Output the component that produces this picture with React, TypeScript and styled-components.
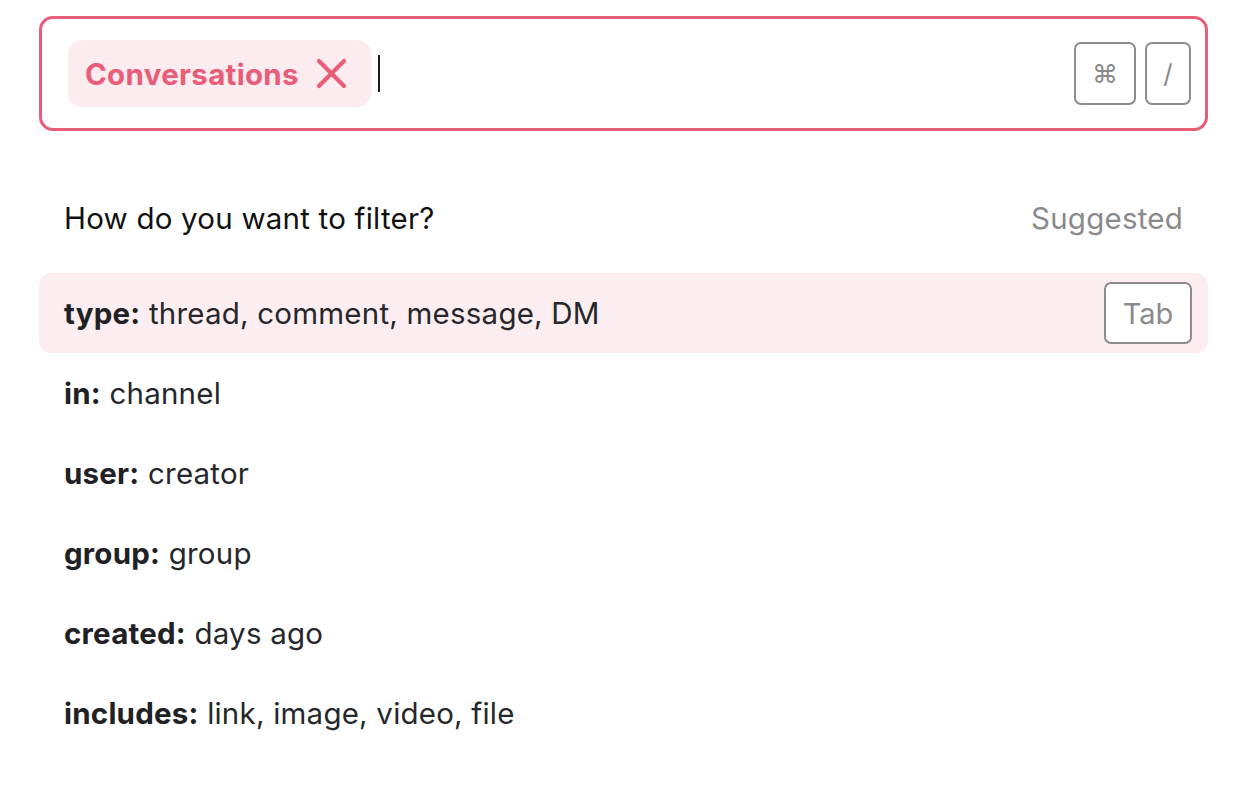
import React from "react";
import styled, { createGlobalStyle } from "styled-components";

const Global = createGlobalStyle`
  html, body { margin: 0; padding: 0; background: #ffffff; }
  body {
    font-family: Inter, "Noto Sans", sans-serif;
    -webkit-font-smoothing: antialiased;
  }
  * { box-sizing: border-box; }
`;

const PINK = "#e85d78";

const Page = styled.div`
  padding: 16px 26px 40px 39px;
  font-size: 29.5px;
  letter-spacing: 0.22px;
`;

const SearchBox = styled.div`
  height: 115px;
  border: 3px solid ${PINK};
  border-radius: 14px;
  display: flex;
  align-items: center;
  padding: 0 14px 0 26px;
`;

const Chip = styled.div`
  height: 67px;
  display: flex;
  align-items: center;
  gap: 17px;
  padding: 0 24px 0 17px;
  background: #fcebef;
  border-radius: 14px;
  color: ${PINK};
  font-weight: 700;
  font-size: 29.5px;
  letter-spacing: 0.3px;
`;

const Caret = styled.div`
  width: 2px;
  height: 37px;
  background: #1c1c1c;
  margin-left: 7px;
`;

const Spacer = styled.div`
  flex: 1;
`;

const Keys = styled.div`
  display: flex;
  gap: 9px;
`;

const Key = styled.div<{ $w: number; $h?: number; $fs?: number }>`
  width: ${(p) => p.$w}px;
  height: ${(p) => p.$h ?? 63}px;
  border: 2px solid #8c8c8c;
  border-radius: 7px;
  display: flex;
  align-items: center;
  justify-content: center;
  color: #8a8a8a;
  font-size: ${(p) => p.$fs ?? 26}px;
  letter-spacing: 0;
  background: #ffffff;
`;

const Header = styled.div`
  margin-top: 47px;
  height: 80px;
  display: flex;
  align-items: center;
  justify-content: space-between;
  padding: 0 25px 0 25px;
  color: #111111;
`;

const Muted = styled.span`
  color: #8a8a8a;
`;

const List = styled.div`
  margin-top: 15px;
  display: flex;
  flex-direction: column;
`;

const Row = styled.div<{ $active?: boolean }>`
  height: 80px;
  display: flex;
  align-items: center;
  justify-content: space-between;
  padding: 0 16px 0 25px;
  border-radius: 12px;
  background: ${(p) => (p.$active ? "#fcedf0" : "transparent")};
  color: #25272b;
`;

const Label = styled.b`
  font-weight: 700;
  color: #1f2125;
`;

const XIcon = () => (
  <svg width="31" height="31" viewBox="0 0 31 31" fill="none">
    <path d="M3 3 L28 28 M28 3 L3 28" stroke={PINK} strokeWidth="4.2" strokeLinecap="round" />
  </svg>
);

const rows: [string, string][] = [
  ["type:", "thread, comment, message, DM"],
  ["in:", "channel"],
  ["user:", "creator"],
  ["group:", "group"],
  ["created:", "days ago"],
  ["includes:", "link, image, video, file"],
];

export default function App() {
  return (
    <Page>
      <Global />
      <SearchBox>
        <Chip>
          <span>Conversations</span>
          <XIcon />
        </Chip>
        <Caret />
        <Spacer />
        <Keys>
          <Key $w={62}>⌘</Key>
          <Key $w={46}>/</Key>
        </Keys>
      </SearchBox>
      <Header>
        <span>How do you want to filter?</span>
        <Muted>Suggested</Muted>
      </Header>
      <List>
        {rows.map(([k, v], i) => (
          <Row key={k} $active={i === 0}>
            <span>
              <Label>{k}</Label> {v}
            </span>
            {i === 0 && (
              <Key $w={88} $h={62} $fs={29}>
                Tab
              </Key>
            )}
          </Row>
        ))}
      </List>
    </Page>
  );
}
